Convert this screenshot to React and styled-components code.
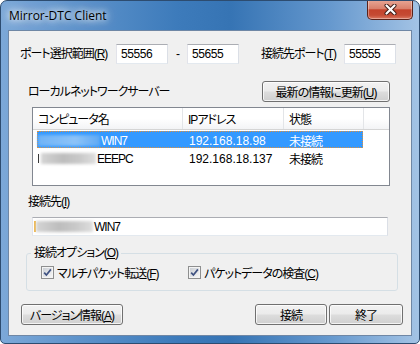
import React from "react";
import styled, { createGlobalStyle } from "styled-components";

const GlobalStyle = createGlobalStyle`
  html, body {
    margin: 0;
    padding: 0;
    width: 420px;
    height: 344px;
    overflow: hidden;
    background: #ffffff;
  }
  body {
    font-family: "Liberation Sans", "Noto Sans CJK JP", sans-serif;
    font-size: 12px;
    font-feature-settings: "palt";
    letter-spacing: -1px;
    color: #000;
  }
  * { box-sizing: border-box; }
`;

const rows = [
  { id: 1, blur: 62, tone: "sel", name: "WIN7", ip: "192.168.18.98", state: "未接続", selected: true },
  { id: 2, blur: 55, tone: "gray", lead: true, name: "EEEPC", ip: "192.168.18.137", state: "未接続" },
];

export default function App() {
  return (
    <>
      <GlobalStyle />
      <Frame>
        <TitleBar>
          <Title>Mirror-DTC Client</Title>
          <CloseButton aria-label="close">
            <svg width="13" height="11" viewBox="0 0 13 11">
              <path d="M2.5 1.5 L10.5 9.5 M10.5 1.5 L2.5 9.5" stroke="#3b1a14" strokeWidth="4" strokeLinecap="round" />
              <path d="M2.5 1.5 L10.5 9.5 M10.5 1.5 L2.5 9.5" stroke="#ffffff" strokeWidth="2.2" strokeLinecap="round" />
            </svg>
          </CloseButton>
        </TitleBar>
        <Client>
          <PortRow>
            <Label $w={96}>ポート選択範囲(<u>R</u>)</Label>
            <TextBox $w={52} $h={20}>55556</TextBox>
            <Dash>-</Dash>
            <TextBox $w={52} $h={20}>55655</TextBox>
            <Spacer $w={22} />
            <Label $w={83}>接続先ポート(<u>T</u>)</Label>
            <TextBox $w={52} $h={20}>55555</TextBox>
          </PortRow>

          <SectionRow>
            <Label>ローカルネットワークサーバー</Label>
            <PushButton $w={128}>最新の情報に更新(<u>U</u>)</PushButton>
          </SectionRow>

          <ListBox>
            <ListHeader>
              <HeadCell>コンピュータ名</HeadCell>
              <HeadCell>IPアドレス</HeadCell>
              <HeadCell>状態</HeadCell>
              <HeadCell $last />
            </ListHeader>
            {rows.map((r) => (
              <ListRow key={r.id} $selected={r.selected}>
                <Cell>
                  {r.lead && <LeadMark />}
                  <Blur $w={r.blur} $tone={r.tone} />
                  {r.name}
                </Cell>
                <Cell $pad={7} $wide>{r.ip}</Cell>
                <Cell $pad={6}>{r.state}</Cell>
              </ListRow>
            ))}
          </ListBox>

          <FieldLabel>接続先(<u>I</u>)</FieldLabel>
          <TargetBox>
            <Caret />
            <Blur $w={57} $tone="gray" />
            WIN7
          </TargetBox>

          <Group>
            <Legend>接続オプション(<u>O</u>)</Legend>
            <CheckRow>
              <CheckItem $w={147}>
                <CheckBox />
                <span>マルチパケット転送(<u>F</u>)</span>
              </CheckItem>
              <CheckItem>
                <CheckBox />
                <span>パケットデータの検査(<u>C</u>)</span>
              </CheckItem>
            </CheckRow>
          </Group>

          <ButtonRow>
            <PushButton $w={102}>バージョン情報(<u>A</u>)</PushButton>
            <ButtonGroup>
              <PushButton $w={72}>接続</PushButton>
              <PushButton $w={74}>終了</PushButton>
            </ButtonGroup>
          </ButtonRow>
        </Client>
      </Frame>
    </>
  );
}

function CheckBox() {
  return (
    <svg width="13" height="13" viewBox="0 0 13 13">
      <defs>
        <linearGradient id="cbfill" x1="0" y1="0" x2="1" y2="1">
          <stop offset="0" stopColor="#cbcfd5" />
          <stop offset="1" stopColor="#f6f6f6" />
        </linearGradient>
      </defs>
      <rect x="0.5" y="0.5" width="12" height="12" fill="#f4f4f4" stroke="#8e8f8f" />
      <rect x="2" y="2" width="9" height="9" fill="url(#cbfill)" />
      <path d="M3.2 6.6 L5.4 9 L9.9 3.4" fill="none" stroke="#3f5282" strokeWidth="1.7" />
    </svg>
  );
}

const Frame = styled.div`
  width: 420px;
  height: 344px;
  display: flex;
  flex-direction: column;
  border: 1px solid #2d4c70;
  border-radius: 7px 7px 5px 5px;
  overflow: hidden;
  background: linear-gradient(90deg, #7ca8d8 0%, #5e93cb 18%, #3d7bbb 42%, #3674b4 55%, #6497cd 78%, #a3c3e5 100%);
`;

const TitleBar = styled.div`
  height: 29px;
  display: flex;
  align-items: flex-start;
`;

const Title = styled.div`
  margin-left: 8px;
  line-height: 29px;
  font-family: "Open Sans", "Noto Sans", sans-serif;
  font-size: 12px;
  letter-spacing: 0;
  color: #000;
  text-shadow: 0 0 6px #fff, 0 0 10px rgba(255, 255, 255, 0.9), 0 0 14px rgba(255, 255, 255, 0.7);
`;

const CloseButton = styled.div`
  margin: -1px 6px 0 auto;
  width: 46px;
  height: 20px;
  display: flex;
  align-items: center;
  justify-content: center;
  border: 1px solid #5a2219;
  border-top: none;
  border-radius: 0 0 5px 5px;
  background: linear-gradient(#e8a796 0%, #d9806c 45%, #c4432c 52%, #c54b34 80%, #dc7a63 100%);
  box-shadow: inset 0 0 0 1px rgba(255, 255, 255, 0.35);
`;

const Client = styled.div`
  flex: 1;
  margin: 0 7px 7px 7px;
  background: #f0f0f0;
  border: 1px solid #6f87a5;
  display: flex;
  flex-direction: column;
`;

const PortRow = styled.div`
  display: flex;
  align-items: center;
  height: 20px;
  margin-top: 13px;
  padding-left: 11px;
`;

const Label = styled.span`
  flex: none;
  white-space: nowrap;
  width: ${(p) => (p.$w ? `${p.$w}px` : "auto")};
  line-height: 16px;
`;

const TextBox = styled.div`
  flex: none;
  width: ${(p) => p.$w}px;
  height: ${(p) => p.$h}px;
  display: flex;
  align-items: center;
  padding-left: 4px;
  letter-spacing: -0.4px;
  background: #ffffff;
  border: 1px solid;
  border-color: #abadb3 #dbdfe6 #e3e9ef #e2e3ea;
  white-space: nowrap;
`;

const Dash = styled.span`
  flex: none;
  width: 19px;
  text-align: center;
`;

const Spacer = styled.span`
  flex: none;
  width: ${(p) => p.$w}px;
`;

const SectionRow = styled.div`
  display: flex;
  align-items: center;
  justify-content: space-between;
  height: 21px;
  margin-top: 17px;
  padding: 0 21px 0 19px;
`;

const PushButton = styled.button`
  flex: none;
  width: ${(p) => p.$w}px;
  height: 21px;
  padding: 0;
  font-family: "Liberation Sans", "Noto Sans CJK JP", sans-serif;
  font-size: 12px;
  font-feature-settings: "palt";
  letter-spacing: -1px;
  color: #000;
  border: 1px solid #707070;
  border-radius: 3px;
  background: linear-gradient(#f2f2f2 0%, #ebebeb 48%, #dddddd 52%, #cfcfcf 100%);
  box-shadow: inset 0 0 0 1px rgba(255, 255, 255, 0.75);
`;

const ListBox = styled.div`
  margin: 5px 0 0 23px;
  width: 358px;
  height: 79px;
  background: #ffffff;
  border: 1px solid #828790;
`;

const ListHeader = styled.div`
  display: grid;
  grid-template-columns: 150px 101px 80px 1fr;
  height: 22px;
  background: linear-gradient(#ffffff 0%, #ffffff 50%, #f3f4f6 100%);
  border-bottom: 1px solid #d5d5d5;
`;

const HeadCell = styled.div`
  display: flex;
  align-items: center;
  padding-left: 5px;
  border-right: ${(p) => (p.$last ? "none" : "1px solid #e3e5e8")};
  white-space: nowrap;
`;

const ListRow = styled.div`
  display: grid;
  grid-template-columns: 144px 101px 79px;
  width: 326px;
  height: 17px;
  margin: 1px 0 0 4px;
  align-items: center;
  color: ${(p) => (p.$selected ? "#ffffff" : "#000000")};
  background: ${(p) => (p.$selected ? "#3399ff" : "transparent")};
  border: 1px ${(p) => (p.$selected ? "dotted #e0903a" : "solid transparent")};
`;

const Cell = styled.div`
  display: flex;
  align-items: center;
  padding-left: ${(p) => p.$pad || 0}px;
  letter-spacing: ${(p) => (p.$wide ? "0" : "-1px")};
  white-space: nowrap;
`;

const Blur = styled.span`
  display: inline-block;
  flex: none;
  width: ${(p) => p.$w}px;
  height: 11px;
  margin-right: 1px;
  background: ${(p) =>
    p.$tone === "sel"
      ? "linear-gradient(90deg, #6fb3f7, #8cc3f8 60%, #5fa9f4)"
      : "linear-gradient(90deg, #d4d4d4, #bdbdbd 40%, #c9c9c9 70%, #dedede)"};
  filter: blur(1.6px);
`;

const LeadMark = styled.span`
  display: inline-block;
  width: 1px;
  height: 9px;
  margin-right: 2px;
  background: #333;
`;

const FieldLabel = styled.div`
  margin-top: 8px;
  padding-left: 19px;
  line-height: 16px;
`;

const TargetBox = styled.div`
  margin: 7px 0 0 23px;
  width: 356px;
  height: 19px;
  display: flex;
  align-items: center;
  padding-left: 1px;
  background: #ffffff;
  border: 1px solid;
  border-color: #abadb3 #dbdfe6 #e3e9ef #e2e3ea;
`;

const Caret = styled.span`
  display: inline-block;
  width: 2px;
  height: 11px;
  background: #f2b84a;
`;

const Group = styled.fieldset`
  margin: 9px 0 0 17px;
  width: 372px;
  padding: 0 0 10px 4px;
  border: 1px solid #d5dfe5;
  border-radius: 3px;
  min-width: 0;
`;

const Legend = styled.legend`
  padding: 0 3px;
  line-height: 16px;
`;

const CheckRow = styled.div`
  display: flex;
  align-items: center;
  height: 16px;
  margin: 3px 0 0 10px;
`;

const CheckItem = styled.label`
  display: flex;
  align-items: center;
  gap: 3px;
  width: ${(p) => (p.$w ? `${p.$w}px` : "auto")};
  white-space: nowrap;
  svg { flex: none; }
`;

const ButtonRow = styled.div`
  display: flex;
  justify-content: space-between;
  margin-top: 13px;
  padding: 0 8px 0 12px;
`;

const ButtonGroup = styled.div`
  display: flex;
  gap: 2px;
`;
